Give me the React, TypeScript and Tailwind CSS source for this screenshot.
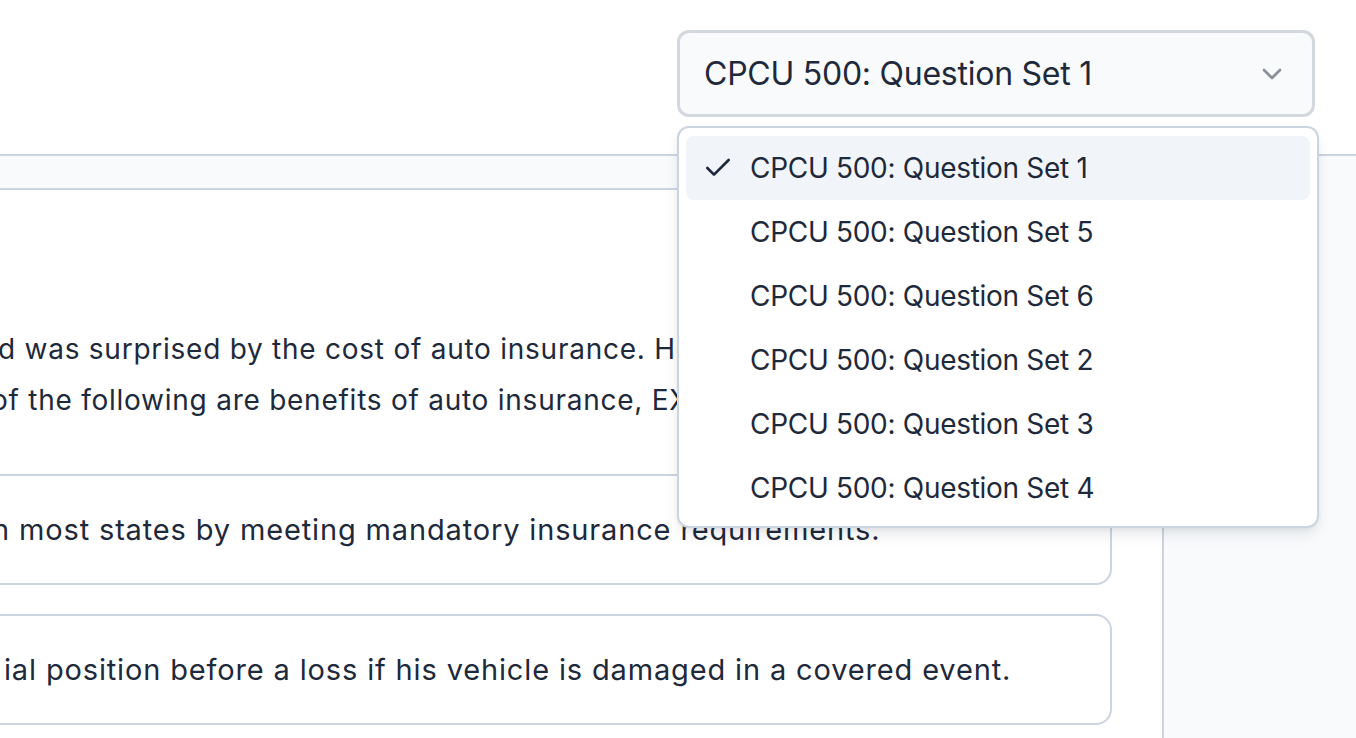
import React from "react";

const items = [
  "CPCU 500: Question Set 1",
  "CPCU 500: Question Set 5",
  "CPCU 500: Question Set 6",
  "CPCU 500: Question Set 2",
  "CPCU 500: Question Set 3",
  "CPCU 500: Question Set 4",
];

function Check() {
  return (
    <svg width="32" height="32" viewBox="0 0 24 24" fill="none" stroke="currentColor" strokeWidth="2" strokeLinecap="round" strokeLinejoin="round">
      <path d="M20 6 9 17l-5-5" />
    </svg>
  );
}

function Chevron() {
  return (
    <svg width="32" height="32" viewBox="0 0 24 24" fill="none" stroke="currentColor" strokeWidth="2" strokeLinecap="round" strokeLinejoin="round">
      <path d="m6 9 6 6 6-6" />
    </svg>
  );
}

export default function App() {
  return (
    <div className="relative w-[1356px] h-[738px] overflow-hidden bg-white font-['Inter','Noto_Sans',sans-serif] text-[#1e293b]">
      {/* Header */}
      <div className="h-[156px] border-b-2 border-[#cbd5e1] flex justify-end items-start pr-[41px] pt-[30px]">
        <button className="w-[638px] h-[87px] flex items-center justify-between rounded-[12px] border-[3px] border-[#d3d8df] bg-[#f8fafc] pl-[24px] pr-[24px] text-[32px] text-[#1e293b]">
          <span className="tracking-[-0.25px]">CPCU 500: Question Set 1</span>
          <span className="text-[#1e293b] opacity-50">
            <Chevron />
          </span>
        </button>
      </div>

      {/* Body */}
      <div className="flex h-[582px]">
        <div className="w-[1162px] overflow-hidden flex flex-col">
          <div className="h-[34px] shrink-0 bg-[#f8fafc] border-b-2 border-[#cbd5e1]" />
          <div className="pt-[134px] text-[28px] leading-[51px] tracking-[0.75px] whitespace-nowrap">
            <div className="ml-[-2px]">d was surprised by the cost of auto insurance. He wants to know why it is worth it.</div>
            <div className="ml-[-9px]">of the following are benefits of auto insurance, EXCEPT:</div>
          </div>
          <div className="mt-[48px] flex flex-col gap-[29px]">
            <div className="ml-[-40px] w-[1152px] h-[111px] shrink-0 rounded-[16px] border-2 border-[#cbd5e1] flex items-center text-[29px] tracking-[0.85px] whitespace-nowrap">
              <span className="ml-[30px]">n most states by meeting mandatory insurance requirements.</span>
            </div>
            <div className="ml-[-40px] w-[1152px] h-[111px] shrink-0 rounded-[16px] border-2 border-[#cbd5e1] flex items-center text-[29px] tracking-[0.85px] whitespace-nowrap">
              <span className="ml-[42px]">ial position before a loss if his vehicle is damaged in a covered event.</span>
            </div>
          </div>
        </div>
        <div className="flex-1 bg-[#f8fafc] border-l-2 border-[#cbd5e1]" />
      </div>

      {/* Dropdown popover */}
      <div className="absolute left-[677px] top-[126px] w-[642px] h-[402px] rounded-[12px] border-2 border-[#cbd5e1] bg-white shadow-[0_8px_16px_-4px_rgba(15,23,42,0.12),0_2px_6px_-2px_rgba(15,23,42,0.08)] px-[7px] pt-[8px] pb-[6px]">
        {items.map((t, i) => (
          <div
            key={t}
            className={
              "relative h-[64px] flex items-center rounded-[8px] pl-[64px] text-[28px] tracking-[-0.3px] text-[#1e293b] " +
              (i === 0 ? "bg-[#f1f5f9]" : "")
            }
          >
            {i === 0 && (
              <span className="absolute left-[16px] top-[16px] text-[#1e293b]">
                <Check />
              </span>
            )}
            <span>{t}</span>
          </div>
        ))}
      </div>
    </div>
  );
}
